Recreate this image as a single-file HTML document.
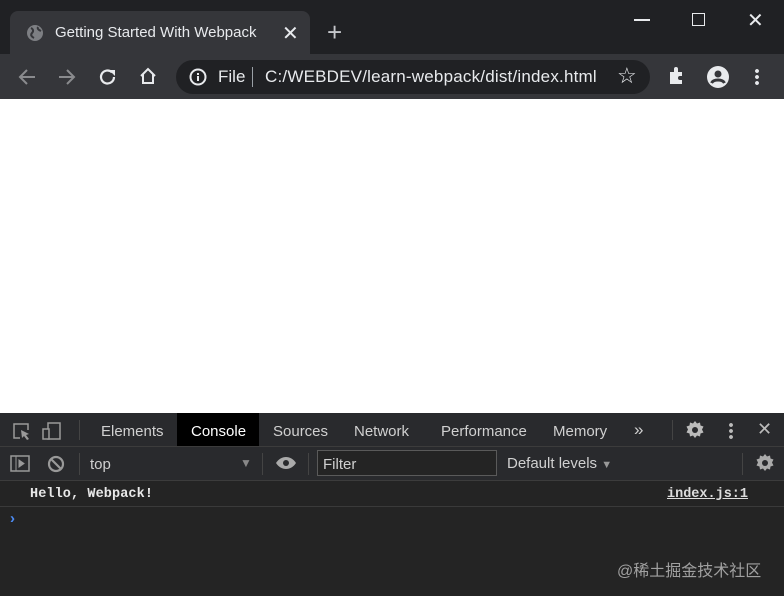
<!DOCTYPE html>
<html><head><style>
*{margin:0;padding:0;box-sizing:border-box}
body{width:784px;height:596px;overflow:hidden;font-family:"Liberation Sans",sans-serif;background:#fff;position:relative}
.a{position:absolute}
.t{color:#e8eaed;font-size:15px;white-space:nowrap}
.d{color:#d0d0d0;font-size:15px;white-space:nowrap}
</style></head><body>
<div class="a" style="left:0;top:0;width:784px;height:54px;background:#202124"></div>
<div class="a" style="left:10px;top:11px;width:300px;height:44px;background:#35363a;border-radius:8px 8px 0 0"></div>
<svg class="a" style="left:26px;top:24px" width="18" height="18" viewBox="0 0 18 18"><circle cx="9" cy="9" r="8" fill="#7d7f83"/><path d="M5 4c2 1 3 3 1 5s0 4 2 5M12 3c-1 2 1 3 3 4" stroke="#35363a" stroke-width="2" fill="none"/></svg>
<div class="a t" style="left:55px;top:24px">Getting Started With Webpack</div>
<div class="a t" style="left:282px;top:21px;font-size:20px">✕</div>
<div class="a t" style="left:327px;top:17px;font-size:26px;color:#c5c7cb">+</div>
<div class="a" style="left:634px;top:19px;width:16px;height:1.5px;background:#e8eaed"></div>
<div class="a" style="left:692px;top:13px;width:13px;height:13px;border:1.5px solid #e8eaed"></div>
<div class="a t" style="left:747px;top:8px;font-size:20px">✕</div>
<div class="a" style="left:0;top:54px;width:784px;height:45px;background:#35363a"></div>
<svg class="a" style="left:17px;top:67px" width="20" height="20"><path d="M18 10H3M10 3l-7 7 7 7" stroke="#8a8b8e" stroke-width="2" fill="none"/></svg>
<svg class="a" style="left:57px;top:67px" width="20" height="20"><path d="M2 10h15M10 3l7 7-7 7" stroke="#8a8b8e" stroke-width="2" fill="none"/></svg>
<svg class="a" style="left:98px;top:67px" width="20" height="20"><path d="M16 10a6.5 6.5 0 11-2-4.7" stroke="#e8eaed" stroke-width="2.2" fill="none"/><path d="M11 3h6v6z" fill="#e8eaed"/></svg>
<svg class="a" style="left:138px;top:66px" width="20" height="20" viewBox="0 0 20 20"><path d="M3 10L10 3l7 7M5 8v9h10V8" stroke="#e8eaed" stroke-width="2" fill="none"/></svg>
<div class="a" style="left:176px;top:60px;width:474px;height:34px;background:#202124;border-radius:17px"></div>
<svg class="a" style="left:189px;top:68px" width="18" height="18"><circle cx="9" cy="9" r="7.5" stroke="#e8eaed" stroke-width="2" fill="none"/><rect x="8" y="8" width="2" height="5" fill="#e8eaed"/><rect x="8" y="5" width="2" height="2" fill="#e8eaed"/></svg>
<div class="a t" style="left:218px;top:67px;font-size:17px">File</div>
<div class="a" style="left:252px;top:67px;width:1px;height:20px;background:#9aa0a6"></div>
<div class="a t" style="left:265px;top:67px;font-size:17px;letter-spacing:0.2px">C:/WEBDEV/learn-webpack/dist/index.html</div>
<div class="a t" style="left:617px;top:63px;font-size:22px">☆</div>
<svg class="a" style="left:667px;top:66px" width="20" height="20"><path d="M3 6h4V3a2 2 0 014 0v3h4v4h-2a2 2 0 000 4h2v4H3z" fill="#e8eaed"/></svg>
<svg class="a" style="left:706px;top:65px" width="24" height="24"><circle cx="12" cy="12" r="11" fill="#e8eaed"/><circle cx="12" cy="9" r="3.5" fill="#35363a"/><path d="M5.5 18c2-4 11-4 13 0" stroke="#35363a" stroke-width="3" fill="none"/></svg>
<div class="a" style="left:755px;top:68px;width:4px;height:18px;background:radial-gradient(circle,#e8eaed 1.8px,transparent 2px) 0 0/4px 6px"></div>
<div class="a" style="left:0;top:413px;width:784px;height:34px;background:#292a2d;border-bottom:1px solid #3c3c3c"></div>
<div class="a" style="left:177px;top:413px;width:82px;height:33px;background:#000"></div>
<svg class="a" style="left:12px;top:421px" width="52" height="20"><path d="M8 17H2V3h14v6" stroke="#9a9a9a" stroke-width="1.5" fill="none"/><path d="M9 9l8 4-3 1 3 4-2 1-3-4-2 2z" fill="#9a9a9a"/><rect x="36" y="2" width="12" height="16" stroke="#9a9a9a" stroke-width="1.5" fill="none"/><rect x="31" y="8" width="6" height="10" stroke="#9a9a9a" stroke-width="1.5" fill="#292a2d"/></svg>
<div class="a" style="left:79px;top:420px;width:1px;height:20px;background:#444"></div>
<div class="a d" style="left:101px;top:423px">Elements</div>
<div class="a d" style="left:191px;top:423px;color:#fff">Console</div>
<div class="a d" style="left:273px;top:423px">Sources</div>
<div class="a d" style="left:354px;top:423px">Network</div>
<div class="a d" style="left:441px;top:423px">Performance</div>
<div class="a d" style="left:553px;top:423px">Memory</div>
<div class="a d" style="left:634px;top:420px;font-size:17px">»</div>
<div class="a" style="left:672px;top:420px;width:1px;height:20px;background:#444"></div>
<svg class="a" style="left:685px;top:420px" width="20" height="20" viewBox="0 0 20 20"><path d="M10 1l2 2.5 3-1 .5 3 3 1-1.5 3 1.5 3-3 1-.5 3-3-1-2 2.5-2-2.5-3 1-.5-3-3-1 1.5-3-1.5-3 3-1 .5-3 3 1z" fill="#bbb"/><circle cx="10" cy="10" r="3" fill="#292a2d"/></svg>
<div class="a" style="left:729px;top:422px;width:4px;height:18px;background:radial-gradient(circle,#bbb 1.8px,transparent 2px) 0 0/4px 6px"></div>
<div class="a d" style="left:757px;top:419px;font-size:18px;color:#bbb">✕</div>
<div class="a" style="left:0;top:447px;width:784px;height:34px;background:#292a2d;border-bottom:1px solid #3c3c3c"></div>
<svg class="a" style="left:10px;top:455px" width="40" height="18"><rect x="1" y="1" width="18" height="15" stroke="#999" stroke-width="1.5" fill="none"/><path d="M6 1v15M9 5l5 3.5-5 3.5z" stroke="#999" fill="#999"/></svg>
<svg class="a" style="left:47px;top:455px" width="18" height="18"><circle cx="9" cy="9" r="7" stroke="#999" stroke-width="2.2" fill="none"/><path d="M4 4l10 10" stroke="#999" stroke-width="2.2"/></svg>
<div class="a" style="left:79px;top:453px;width:1px;height:22px;background:#444"></div>
<div class="a d" style="left:90px;top:456px">top</div>
<div class="a d" style="left:240px;top:456px;font-size:12px;color:#888">▼</div>
<div class="a" style="left:262px;top:453px;width:1px;height:22px;background:#444"></div>
<svg class="a" style="left:275px;top:456px" width="22" height="14"><path d="M1 7c5-8 15-8 20 0-5 8-15 8-20 0z" fill="#aaa"/><circle cx="11" cy="7" r="3" fill="#292a2d"/></svg>
<div class="a" style="left:308px;top:453px;width:1px;height:22px;background:#444"></div>
<div class="a" style="left:317px;top:450px;width:180px;height:26px;border:1px solid #5a5a5a;background:#242424"></div>
<div class="a d" style="left:323px;top:456px">Filter</div>
<div class="a d" style="left:507px;top:455px">Default levels <span style="font-size:11px;color:#999">▼</span></div>
<div class="a" style="left:742px;top:453px;width:1px;height:22px;background:#444"></div>
<svg class="a" style="left:755px;top:453px" width="20" height="20" viewBox="0 0 20 20"><path d="M10 1l2 2.5 3-1 .5 3 3 1-1.5 3 1.5 3-3 1-.5 3-3-1-2 2.5-2-2.5-3 1-.5-3-3-1 1.5-3-1.5-3 3-1 .5-3 3 1z" fill="#aaa"/><circle cx="10" cy="10" r="3" fill="#292a2d"/></svg>
<div class="a" style="left:0;top:481px;width:784px;height:115px;background:#242424"></div>
<div class="a" style="left:0;top:506px;width:784px;height:1px;background:#3a3a3a"></div>
<div class="a" style="left:30px;top:487px;font-family:'Liberation Mono',monospace;font-size:13.5px;font-weight:bold;color:#e8e8e8;letter-spacing:0.1px">Hello, Webpack!</div>
<div class="a" style="left:667px;top:487px;font-family:'Liberation Mono',monospace;font-size:13.5px;font-weight:bold;color:#ddd;text-decoration:underline">index.js:1</div>
<div class="a" style="left:10px;top:510px;color:#4d8df6;font-size:15px;font-weight:bold">›</div>
<div class="a" style="left:617px;top:557px;color:#a0a0a0;font-size:16px;font-family:'Liberation Sans','Noto Sans CJK SC',sans-serif">@稀土掘金技术社区</div>
</body></html>
